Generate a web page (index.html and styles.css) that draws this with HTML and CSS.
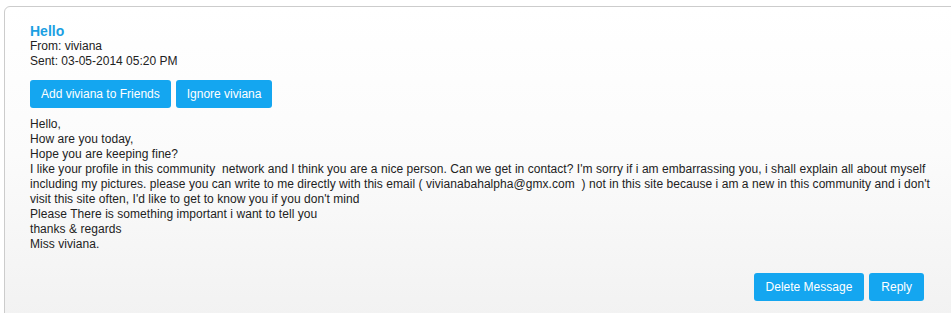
FILE: index.html
```html
<!DOCTYPE html>
<html>
<head>
<meta charset="utf-8">
<link rel="stylesheet" href="styles.css">
</head>
<body>
<div class="page">
  <div class="message">
    <h2 class="subject">Hello</h2>
    <div class="meta">From: viviana</div>
    <div class="meta">Sent: 03-05-2014 05:20 PM</div>
    <div class="actions">
      <button class="btn">Add viviana to Friends</button>
      <button class="btn">Ignore viviana</button>
    </div>
    <div class="body">
      Hello,<br>
      How are you today,<br>
      Hope you are keeping fine?<br>
      I like your profile in this community&nbsp; network and I think you are a nice person. Can we get in contact? I'm sorry if i am embarrassing you, i shall explain all about myself including my pictures. please you can write to me directly with this email ( vivianabahalpha@gmx.com&nbsp; ) not in this site because i am a new in this community and i don't visit this site often, I'd like to get to know you if you don't mind<br>
      Please There is something important i want to tell you<br>
      thanks &amp; regards<br>
      Miss viviana.
    </div>
    <div class="footer">
      <button class="btn">Delete Message</button>
      <button class="btn">Reply</button>
    </div>
  </div>
</div>
</body>
</html>
```

FILE: styles.css
```css
html, body {
  margin: 0;
  padding: 0;
  background: #ffffff;
  overflow: hidden;
}
body {
  font-family: "Liberation Sans", Arial, sans-serif;
  font-size: 12px;
  color: #222222;
}
.page {
  width: 951px;
  height: 313px;
  overflow: hidden;
  padding: 6px 0 0 4px;
  box-sizing: border-box;
}
.message {
  width: 961px;
  box-sizing: border-box;
  border: 1px solid #cccccc;
  border-radius: 6px;
  background: linear-gradient(to bottom, #ffffff 0%, #fbfbfb 45%, #f1f1f1 100%);
  padding: 17px 37px 30px 25px;
  min-height: 330px;
}
.subject {
  margin: 0;
  font-size: 14px;
  line-height: 15px;
  font-weight: bold;
  color: #1b9fe2;
}
.meta {
  line-height: 15px;
}
.actions {
  display: flex;
  gap: 5px;
  margin-top: 11px;
}
.btn {
  font-family: "Liberation Sans", Arial, sans-serif;
  font-size: 12px;
  line-height: 14px;
  color: #ffffff;
  background: #14a6f0;
  border: none;
  border-radius: 3px;
  padding: 7px 11px;
  height: 28px;
  cursor: pointer;
}
.footer .btn {
  padding: 7px 12px;
}
.body {
  margin-top: 9px;
  margin-right: -8px;
  line-height: 15px;
  letter-spacing: 0.05px;
}
.footer {
  display: flex;
  justify-content: flex-end;
  gap: 5px;
  margin-top: 21px;
  margin-right: 3px;
}
```
